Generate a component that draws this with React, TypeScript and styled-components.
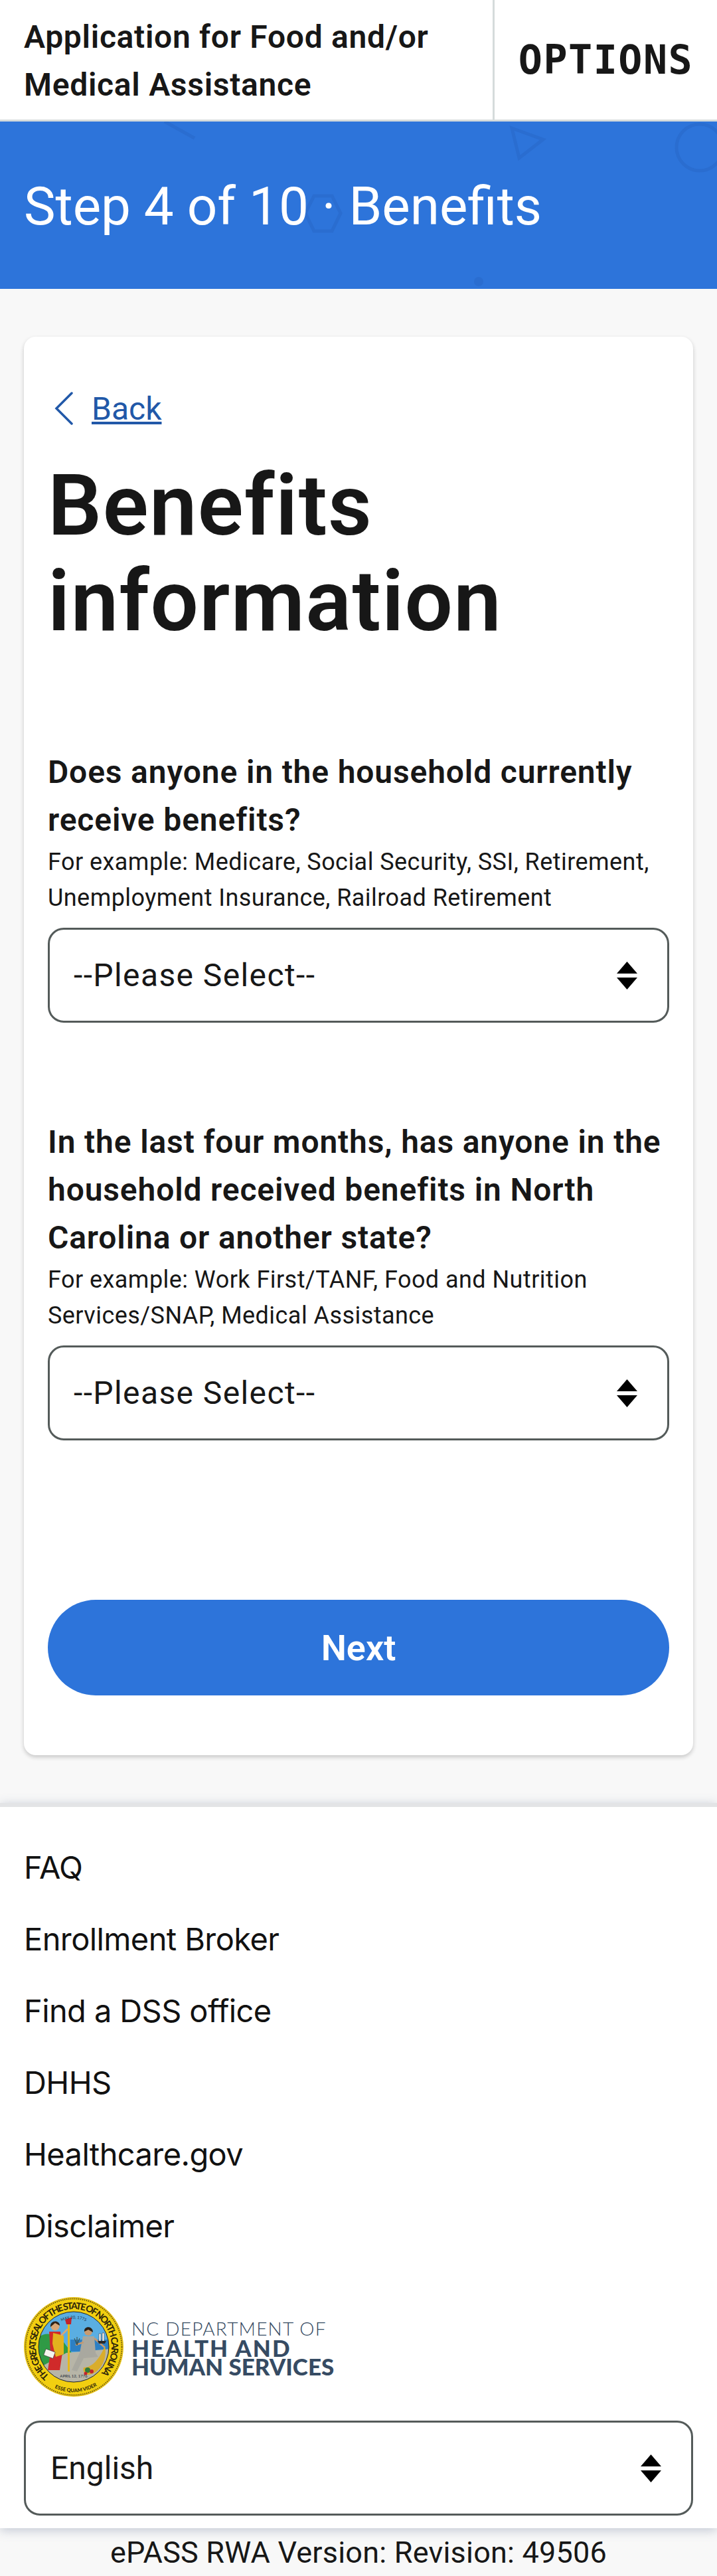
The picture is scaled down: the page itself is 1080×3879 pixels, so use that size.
import React from "react";
import styled, { createGlobalStyle } from "styled-components";

const Global = createGlobalStyle`
  html, body { margin: 0; padding: 0; background: #f8f8f8; }
  * { box-sizing: border-box; }
`;
const plex = `Roboto, "Noto Sans", sans-serif`;
const Page = styled.div`width: 1080px; height: 3879px; font-family: ${plex}; color: #171717; background: #f8f8f8; overflow: hidden;`;
const TopBar = styled.header`display: flex; height: 183px; background: #fff; border-bottom: 3px solid #d5dbdb;`;
const AppTitle = styled.div`flex: 1; padding: 20px 0 0 36px; font-size: 48px; line-height: 72px; font-weight: 600; letter-spacing: 0.7px;`;
const OptionsButton = styled.div`width: 338px; border-left: 3px solid #d5dbdb; font-family: "DejaVu Sans Mono", monospace; font-weight: 700; font-size: 60px; letter-spacing: 1.5px; display: flex; align-items: center; justify-content: center;`;
const Banner = styled.div`position: relative; height: 252px; background: #2d74da; color: #fff; font-size: 80px; font-weight: 400; display: flex; align-items: center; padding: 4px 0 0 36px; overflow: hidden;`;
const BannerShapes = styled.svg`position: absolute; left: 0; top: 0;`;
const BannerText = styled.span`position: relative;`;
const Main = styled.main`padding: 72px 36px; height: 2280px;`;
const Card = styled.section`background: #fff; border-radius: 18px; box-shadow: 0 3px 6px rgba(0,0,0,.2); height: 2136px; padding: 72px 36px 0;`;
const BackLink = styled.a`display: flex; align-items: center; gap: 28px; height: 72px; padding-left: 10px; color: #2158a8; font-size: 48px; text-decoration: underline;`;
const Heading = styled.h1`margin: 38px 0 0; font-size: 128px; line-height: 144px; font-weight: 600; letter-spacing: 1.4px;`;
const Question = styled.div<{ $top: number }>`margin-top: ${(p) => p.$top}px;`;
const Label = styled.div`font-size: 48px; line-height: 72px; font-weight: 600; letter-spacing: 0.85px;`;
const Hint = styled.div`font-size: 36px; line-height: 54px; letter-spacing: 0.45px;`;
const Select = styled.div`margin-top: 18px; height: 143px; border: 3px solid #545b5a; border-radius: 24px; background: #fff; display: flex; align-items: center; justify-content: space-between; padding: 0 45px 0 36px; font-size: 48px; letter-spacing: 1.4px;`;
const Arrows = styled.svg`flex: none;`;
const NextButton = styled.button`display: block; width: 100%; height: 144px; margin-top: 240px; border: 0; border-radius: 72px; background: #2d74da; color: #fff; font: 600 54px ${plex};`;
const Footer = styled.footer`background: #fff; border-top: 6px solid #e3e4e6; height: 1092px; box-shadow: 0 3px 15px rgba(90,105,140,.35); padding: 36px 36px 0; position: relative;`;
const FooterLinks = styled.nav`display: flex; flex-direction: column;`;
const FooterLink = styled.a`height: 108px; display: flex; align-items: center; font-family: Inter, sans-serif; font-size: 47px; letter-spacing: -0.6px; color: #111;`;
const Logo = styled.div`display: flex; align-items: center; gap: 12px; margin-top: 54px; height: 150px;`;
const LogoText = styled.div`display: flex; flex-direction: column; font-family: Lato, sans-serif; color: #364b63;`;
const LogoLight = styled.span`font-size: 28px; line-height: 30px; font-weight: 300; letter-spacing: 1.2px;`;
const LogoBold = styled.span<{ $spacing: number }>`font-size: 35px; line-height: 28px; font-weight: 900; letter-spacing: ${(p) => p.$spacing}px;`;
const LangSelect = styled(Select)`margin-top: 36px; padding: 0 45px 0 37px; letter-spacing: 0;`;
const Version = styled.div`height: 72px; display: flex; align-items: center; justify-content: center; font-size: 45px; letter-spacing: 0.2px;`;

const UpDown = () => (
  <Arrows width="31" height="42" viewBox="0 0 31 42"><path d="M15.5 0 L31 18 H0Z M0 24 H31 L15.5 42Z" fill="#000"/></Arrows>
);

const Seal = () => (
  <svg width="150" height="150" viewBox="0 0 150 150">
    <defs>
      <path id="ring" d="M38.4 118.7 A57 57 0 1 1 111.6 118.7" />
      <path id="motto" d="M41 134 A68 68 0 0 0 109 134" />
      <path id="may" d="M48 42 A43 43 0 0 1 102 42" />
      <clipPath id="disc"><circle cx="75" cy="75" r="53" /></clipPath>
    </defs>
    <circle cx="75" cy="75" r="75" fill="#e8c31a" />
    <circle cx="75" cy="75" r="72.5" fill="#f2cf10" stroke="#6f5c10" strokeWidth="2" strokeDasharray="1.5 1.5" />
    <circle cx="75" cy="75" r="53" fill="#5aaee2" />
    <g clipPath="url(#disc)">
      <rect x="70" y="64" width="60" height="18" fill="#2d80c4" />
      <path d="M20 62 C34 50 46 56 60 68 L72 84 L30 110 L20 100Z" fill="#2f9a45" />
      <path d="M20 108 L64 84 L130 78 V130 H20Z" fill="#b7b5a7" />
      <path d="M38 52 L55 52 L58 84 L54 110 L36 110 L40 84Z" fill="#d02a2a" />
      <path d="M44 54 L60 58 L60 86 L48 90 L43 70Z" fill="#e3b21e" />
      <rect x="31" y="80" width="15" height="10" transform="rotate(20 38 85)" fill="#f4f4ee" stroke="#333" strokeWidth=".6" />
      <circle cx="47" cy="44" r="6.5" fill="#d8a777" />
      <path d="M40 45 C39 34 54 34 54 43 L47 39Z" fill="#2f2318" />
      <path d="M56 58 L66 48" stroke="#d8a777" strokeWidth="2.5" />
      <rect x="66" y="38" width="3" height="74" fill="#e5b81c" />
      <path d="M62 34 L72 30 L71 41 L64 41Z" fill="#c2232b" />
      <circle cx="97" cy="52" r="6" fill="#c89a70" />
      <path d="M91 52 C90 43 104 43 104 53 L97 49Z" fill="#2a2118" />
      <path d="M89 59 H106 L108 84 L112 90 L90 92 L80 112 L72 110 L84 84Z" fill="#a9a89f" />
      <path d="M90 68 L78 72 M106 62 L122 76" stroke="#c89a70" strokeWidth="2.5" />
      <path d="M80 72 L76 62 M80 72 L80 60 M80 72 L84 62" stroke="#3b4a3a" strokeWidth="1" />
      <path d="M122 74 C126 92 116 114 98 117 C92 117 88 112 90 106 C104 106 114 92 122 74Z" fill="#d9ad2c" />
      <circle cx="96" cy="110" r="4" fill="#2f7a3a" />
      <circle cx="102" cy="112" r="3" fill="#c2232b" />
      <circle cx="93" cy="115" r="2.5" fill="#c2232b" />
      <path d="M111 66 H124 L122 70 H113Z" fill="#2a2a2a" />
      <path d="M113 66 V55 H116 V66 M118 66 V54 H121 V66" fill="#eee" stroke="#333" strokeWidth=".5" />
    </g>
    <circle cx="75" cy="75" r="53" fill="none" stroke="#222" strokeWidth="1" />
    <text fontFamily="Lato, sans-serif" fontSize="14" fontWeight="700" fill="#2b230a">
      <textPath href="#ring" textLength="272" lengthAdjust="spacing">THE GREAT SEAL OF THE STATE OF NORTH CAROLINA</textPath>
    </text>
    <text fontFamily="Lato, sans-serif" fontSize="7.5" fontWeight="700" fill="#2b230a">
      <textPath href="#motto" startOffset="6">ESSE QUAM VIDERI</textPath>
    </text>
    <text fontFamily="Lato, sans-serif" fontSize="6" fill="#1c2a38">
      <textPath href="#may" startOffset="10">MAY 20, 1775</textPath>
    </text>
    <text x="75" y="121" textAnchor="middle" fontFamily="Lato, sans-serif" fontSize="6" fill="#1c2a38">APRIL 12, 1776</text>
  </svg>
);

export default function App() {
  return (
    <Page>
      <Global />
      <TopBar>
        <AppTitle>Application for Food and/or<br />Medical Assistance</AppTitle>
        <OptionsButton>OPTIONS</OptionsButton>
      </TopBar>
      <Banner>
        <BannerShapes width="1080" height="252" viewBox="0 183 1080 252" fill="none" stroke="#2a6dd0" strokeWidth="5">
          <path d="M248 183 L293 208" />
          <path d="M771 193 L818 210 L782 238Z" />
          <circle cx="1054" cy="222" r="35" />
          <path d="M473 295 H500 L513 321 L500 348 H473 L460 321Z" />
          <circle cx="721" cy="424" r="7" fill="#2a6dd0" stroke="none" />
        </BannerShapes>
        <BannerText>Step 4 of 10 · Benefits</BannerText>
      </Banner>
      <Main>
        <Card>
          <BackLink>
            <svg width="28" height="50" viewBox="0 0 28 50" fill="none" stroke="#2158a8" strokeWidth="3.5" strokeLinecap="round"><path d="M26 2 L3 25 L26 48" /></svg>
            Back
          </BackLink>
          <Heading>Benefits information</Heading>
          <Question $top={150}>
            <Label>Does anyone in the household currently receive benefits?</Label>
            <Hint>For example: Medicare, Social Security, SSI, Retirement, Unemployment Insurance, Railroad Retirement</Hint>
            <Select>--Please Select--<UpDown /></Select>
          </Question>
          <Question $top={144}>
            <Label>In the last four months, has anyone in the household received benefits in North Carolina or another state?</Label>
            <Hint>For example: Work First/TANF, Food and Nutrition Services/SNAP, Medical Assistance</Hint>
            <Select>--Please Select--<UpDown /></Select>
          </Question>
          <NextButton>Next</NextButton>
        </Card>
      </Main>
      <Footer>
        <FooterLinks>
          <FooterLink>FAQ</FooterLink>
          <FooterLink>Enrollment Broker</FooterLink>
          <FooterLink>Find a DSS office</FooterLink>
          <FooterLink>DHHS</FooterLink>
          <FooterLink>Healthcare.gov</FooterLink>
          <FooterLink>Disclaimer</FooterLink>
        </FooterLinks>
        <Logo>
          <Seal />
          <LogoText>
            <LogoLight>NC DEPARTMENT OF</LogoLight>
            <LogoBold $spacing={2}>HEALTH AND</LogoBold>
            <LogoBold $spacing={0}>HUMAN SERVICES</LogoBold>
          </LogoText>
        </Logo>
        <LangSelect>English<UpDown /></LangSelect>
      </Footer>
      <Version>ePASS RWA Version: Revision: 49506</Version>
    </Page>
  );
}
